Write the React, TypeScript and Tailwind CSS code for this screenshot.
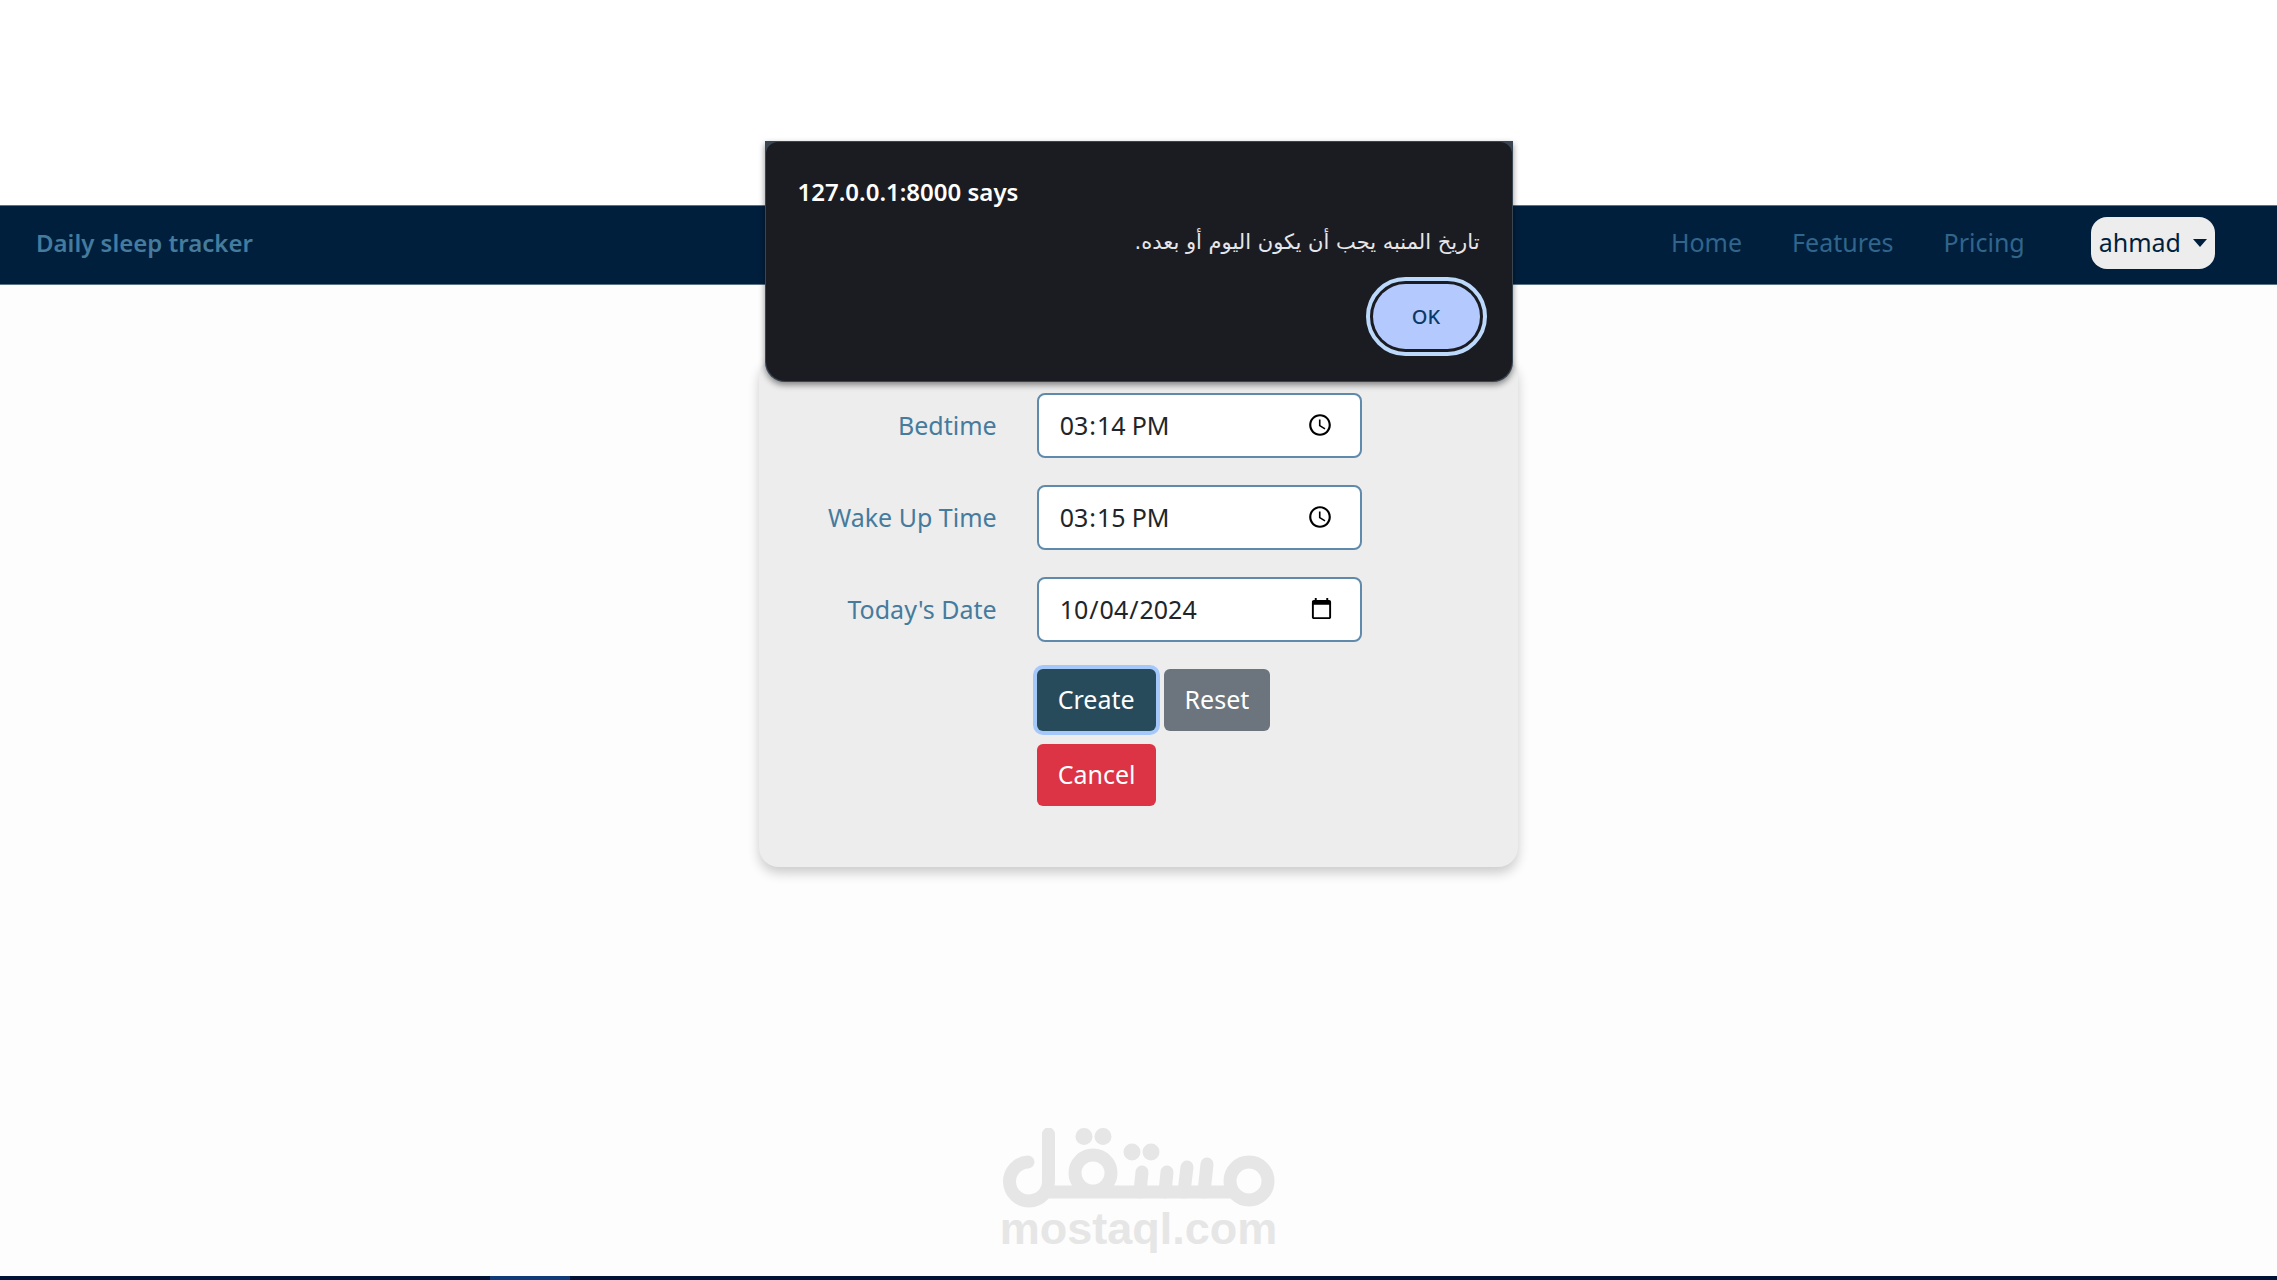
import { useState } from "react";

const navLinks = ["Home", "Features", "Pricing"];

const fields = [
    { id: "bedtime", label: "Bedtime", type: "time", value: "15:14" },
    { id: "wakeup", label: "Wake Up Time", type: "time", value: "15:15" },
    { id: "date", label: "Today's Date", type: "date", value: "2024-10-04" },
];

function Navbar() {
    return (
        <nav className="flex h-20 items-center justify-between border-y border-[#5b7385] bg-[#001f3d] pb-1 pl-9 pr-[62px]">
            <a href="#" className="text-2xl font-semibold text-[#457b9d]">Daily sleep tracker</a>
            <div className="flex items-center gap-[50px]">
                {navLinks.map((link) => (
                    <a key={link} href="#" className="text-[25px] text-[#31658c]">{link}</a>
                ))}
                <button type="button" className="ml-4 flex h-[52px] items-center gap-3 rounded-2xl bg-[#ededed] px-2 text-[25px] text-[#001f3d]">
                    ahmad
                    <svg viewBox="0 0 14 8" className="h-2 w-3.5" fill="currentColor">
                        <path d="M0 0h14L7 8z" />
                    </svg>
                </button>
            </div>
        </nav>
    );
}

function AlarmForm() {
    const [values, setValues] = useState<Record<string, string>>(
        Object.fromEntries(fields.map((f) => [f.id, f.value]))
    );

    return (
        <form
            onSubmit={(e) => e.preventDefault()}
            className="mx-auto mt-[72px] w-1/3 rounded-[20px] bg-[#ededed] px-3.5 pb-[61px] pt-9 shadow-[0_6px_12px_rgba(0,0,0,0.2)]"
        >
            {fields.map((field) => (
                <div key={field.id} className="mb-[27px] grid grid-cols-12 items-center">
                    <label htmlFor={field.id} className="col-span-4 pr-5 text-right text-[25px] text-[#457b9d]">
                        {field.label}
                    </label>
                    <div className="col-span-6 px-5">
                        <input
                            id={field.id}
                            type={field.type}
                            value={values[field.id]}
                            onChange={(e) => setValues({ ...values, [field.id]: e.target.value })}
                            className="h-[65px] w-full rounded-lg border-2 border-[#5f8aab] bg-white pl-5 pr-6 text-[25px] text-[#212529]"
                        />
                    </div>
                </div>
            ))}
            <div className="grid grid-cols-12">
                <div className="col-span-6 col-start-5 flex flex-wrap gap-x-2 gap-y-[13px] px-5">
                    <button type="submit" className="h-[62px] rounded-md bg-[#284b5c] px-[21px] text-[25px] text-white ring-4 ring-[#a5c8fb]">Create</button>
                    <button type="reset" className="h-[62px] rounded-md bg-[#6c757d] px-[21px] text-[25px] text-white">Reset</button>
                    <button type="button" className="h-[62px] rounded-md bg-[#dc3444] px-[21px] text-[25px] text-white">Cancel</button>
                </div>
            </div>
        </form>
    );
}

function AlertDialog() {
    return (
        <div
            role="alertdialog"
            aria-labelledby="alert-title"
            className="absolute left-1/2 top-[141px] w-[748px] -translate-x-1/2 rounded-b-[20px] bg-[#3a4552] p-px shadow-[0_3px_6px_rgba(0,0,0,0.45)]"
        >
            <div className="flex flex-col rounded-b-[20px] rounded-t-xl bg-[#1b1c21] pb-8 pl-8 pr-8 pt-[34px] text-white">
                <h2 id="alert-title" className="text-2xl font-semibold">127.0.0.1:8000 says</h2>
                <p dir="rtl" className="mt-[18px] font-['DejaVu_Sans',sans-serif] text-[21px] leading-8 text-[#e6e6ea]">
                    تاريخ المنبه يجب أن يكون اليوم أو بعده.
                </p>
                <button type="button" className="ml-auto mt-[26px] h-[65px] w-[107px] rounded-full bg-[#b4caff] text-xl font-medium text-[#0b3a66] outline-4 outline-offset-3 outline-[#bcd8fb]">
                    OK
                </button>
            </div>
        </div>
    );
}

function Watermark() {
    return (
        <div className="mx-auto flex w-[274px] flex-col items-center text-[#e6e6e6]">
            <svg viewBox="0 0 274 82" className="h-[82px] w-[274px]" fill="none" stroke="currentColor" strokeWidth="13" strokeLinecap="round">
                <path d="M26 34a19.500 19.500 0 1 0 20.500 19.500V6" />
                <path d="M43 64H231" strokeLinecap="butt" />
                <circle cx="91" cy="45" r="18" />
                <circle cx="247" cy="53" r="19" />
                <path d="M140 44L138 64M165 44L163 64M185 39L182 64M205 36L202 64" />
                <g fill="currentColor" stroke="none">
                    <circle cx="82" cy="8.500" r="8.500" />
                    <circle cx="101" cy="8.500" r="8.500" />
                    <circle cx="130" cy="24" r="8.500" />
                    <circle cx="149" cy="24" r="8.500" />
                </g>
            </svg>
            <span className="font-['Liberation_Sans',sans-serif] text-[45px] font-bold leading-[38px]">mostaql.com</span>
        </div>
    );
}

export default function App() {
    return (
        <div className="relative flex min-h-screen flex-col bg-[#fdfdfd] font-['Noto_Sans',sans-serif]">
            <div className="h-[205px] bg-white" />
            <Navbar />
            <AlarmForm />
            <AlertDialog />
            <div className="mt-auto">
                <Watermark />
                <div className="mt-7 flex h-1 bg-[#001337]">
                    <div className="ml-[490px] w-20 bg-[#0f3c78]" />
                </div>
            </div>
        </div>
    );
}
